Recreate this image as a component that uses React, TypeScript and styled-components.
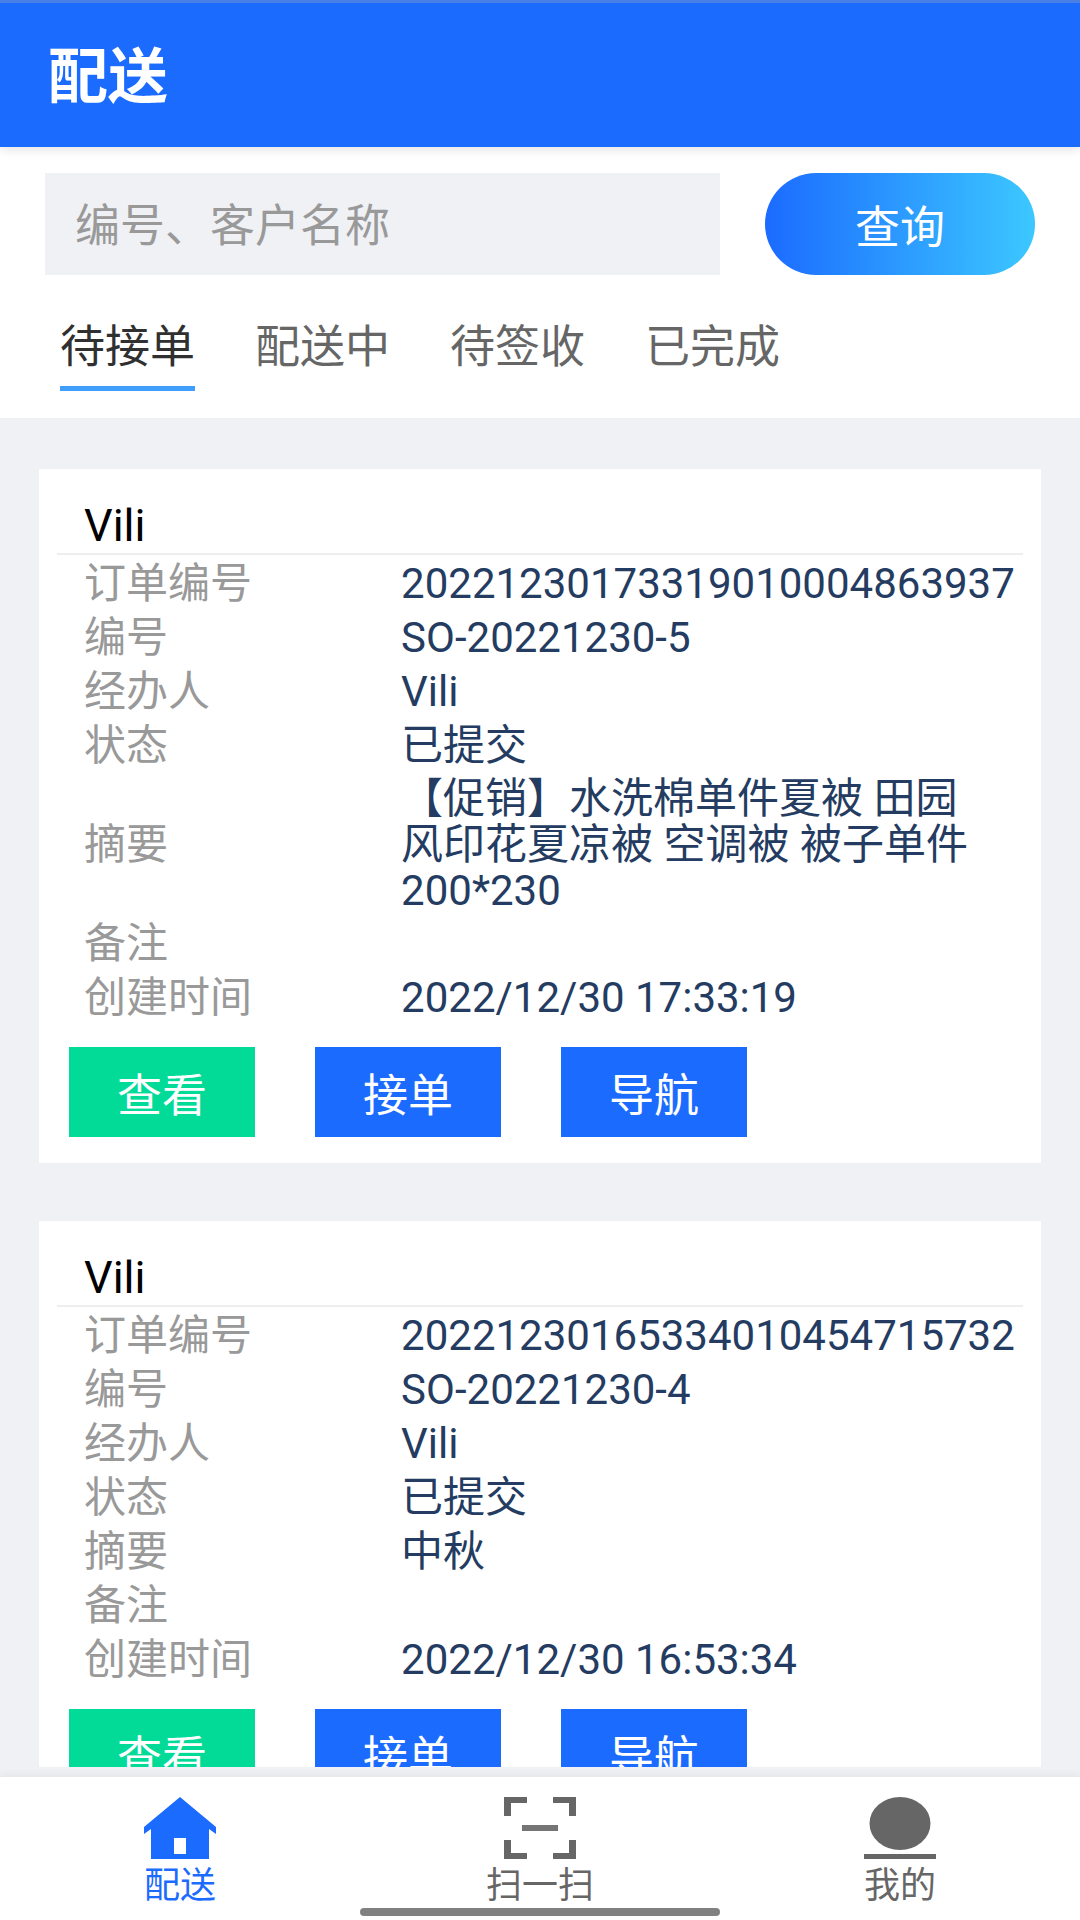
import React, { useState } from "react";
import styled, { createGlobalStyle } from "styled-components";

const BLUE = "#1b6bff";
const GREEN = "#02da98";
const PAGE = "#eff1f5";

const GlobalStyle = createGlobalStyle`
  * { box-sizing: border-box; }
  body {
    margin: 0;
    background: ${PAGE};
    font-family: Roboto, "Noto Sans CJK SC", sans-serif;
  }
  button, input { font-family: inherit; border: 0; border-radius: 0; margin: 0; padding: 0; }
  button { cursor: pointer; }
`;

const Screen = styled.div`
  display: flex;
  flex-direction: column;
  height: 100vh;
`;

const Header = styled.header`
  display: flex;
  align-items: center;
  flex: none;
  height: 147px;
  padding: 6px 48px 0;
  background: ${BLUE};
  border-top: 3px solid #4a80e6;
  box-shadow: 0 2px 10px rgba(0, 0, 0, 0.12);
  z-index: 1;
`;

const Title = styled.h1`
  margin: 0;
  color: #fff;
  font-size: 60px;
  font-weight: 700;
  line-height: 64px;
`;

const Filters = styled.section`
  flex: none;
  padding: 26px 45px 27px;
  background: #fff;
`;

const SearchForm = styled.form`
  display: flex;
  gap: 45px;
`;

const SearchInput = styled.input`
  flex: 1;
  min-width: 0;
  height: 102px;
  padding: 4px 30px 0;
  background: #f0f1f5;
  color: #333;
  font-size: 45px;
  outline: none;
  &::placeholder { color: #999; opacity: 1; }
`;

const SearchButton = styled.button`
  width: 270px;
  height: 102px;
  border-radius: 51px;
  background: linear-gradient(90deg, ${BLUE}, #3cc8ff);
  color: #fff;
  font-size: 45px;
`;

const Tabs = styled.div`
  display: flex;
  gap: 60px;
  margin-top: 43px;
  padding: 0 15px;
`;

const Tab = styled.button<{ $active: boolean }>`
  padding-bottom: 8px;
  background: none;
  border-bottom: 5px solid ${(p) => (p.$active ? "#409eff" : "transparent")};
  color: ${(p) => (p.$active ? "#303030" : "#666")};
  font-size: 45px;
  line-height: 60px;
`;

const OrderList = styled.main`
  display: flex;
  flex-direction: column;
  flex: 1;
  gap: 58px;
  min-height: 0;
  padding: 51px 39px 0;
  overflow-y: auto;
  scrollbar-width: none;
`;

const Card = styled.article`
  flex: none;
  padding: 30px 0 26px;
  background: #fff;
`;

const CardTitle = styled.h2`
  margin: 0 18px;
  padding: 0 27px;
  border-bottom: 2px solid #eee;
  color: #000;
  font-size: 45px;
  font-weight: 400;
  line-height: 54px;
`;

const Fields = styled.dl`
  margin: 0;
  padding: 0 51px 0 45px;
`;

const Field = styled.div`
  display: grid;
  grid-template-columns: 35% 65%;
  align-items: center;
  min-height: 54px;
  padding: 5px 0 1px;
  font-size: 42px;
  line-height: 46px;
`;

const Label = styled.dt`
  color: #999;
`;

const Value = styled.dd`
  margin: 0;
  color: #243c61;
`;

const Actions = styled.div`
  display: flex;
  gap: 60px;
  padding: 24px 30px 0;
`;

const ActionButton = styled.button<{ $color: string }>`
  width: 186px;
  height: 90px;
  background: ${(p) => p.$color};
  color: #fff;
  font-size: 45px;
`;

const BottomBar = styled.footer`
  flex: none;
  margin-top: 10px;
  padding: 20px 0 4px;
  background: #fff;
  box-shadow: 0 -2px 8px rgba(0, 0, 0, 0.06);
`;

const Nav = styled.nav`
  display: flex;
`;

const NavLink = styled.a<{ $active?: boolean }>`
  display: flex;
  flex: 1;
  flex-direction: column;
  align-items: center;
  gap: 5px;
  color: ${(p) => (p.$active ? BLUE : "#666")};
  font-size: 36px;
  line-height: 44px;
  text-decoration: none;
`;

const HomeIndicator = styled.div`
  width: 33.33%;
  height: 8px;
  margin: 0 auto;
  border-radius: 4px;
  background: #808080;
`;

const HouseIcon = () => (
  <svg width="72" height="62" viewBox="0 0 72 62" fill="currentColor" aria-hidden="true">
    <path
      fillRule="evenodd"
      d="M36 0 72 30V37L65 32V62H7V32L0 37V30ZM30 41V57H42V41Z"
    />
  </svg>
);

const ScanIcon = () => (
  <svg width="72" height="62" viewBox="0 0 72 62" fill="currentColor" aria-hidden="true">
    <path d="M0 0H23V6H7V19H0ZM49 0H72V19H65V6H49ZM0 43H7V56H23V62H0ZM65 43H72V62H49V56H65Z" />
    <path d="M18 28H54V34H18Z" opacity="0.9" />
  </svg>
);

const PersonIcon = () => (
  <svg width="72" height="62" viewBox="0 0 72 62" fill="currentColor" aria-hidden="true">
    <ellipse cx="36" cy="26.5" rx="30.5" ry="26.5" />
    <path d="M0 57H72V62H0Z" />
  </svg>
);

const tabs = ["待接单", "配送中", "待签收", "已完成"];

const orders = [
  {
    customer: "Vili",
    fields: [
      ["订单编号", "20221230173319010004863937"],
      ["编号", "SO-20221230-5"],
      ["经办人", "Vili"],
      ["状态", "已提交"],
      ["摘要", "【促销】水洗棉单件夏被 田园风印花夏凉被 空调被 被子单件 200*230"],
      ["备注", ""],
      ["创建时间", "2022/12/30 17:33:19"],
    ],
  },
  {
    customer: "Vili",
    fields: [
      ["订单编号", "20221230165334010454715732"],
      ["编号", "SO-20221230-4"],
      ["经办人", "Vili"],
      ["状态", "已提交"],
      ["摘要", "中秋"],
      ["备注", ""],
      ["创建时间", "2022/12/30 16:53:34"],
    ],
  },
];

export default function App() {
  const [active, setActive] = useState(0);

  return (
    <Screen>
      <GlobalStyle />
      <Header>
        <Title>配送</Title>
      </Header>
      <Filters>
        <SearchForm onSubmit={(e) => e.preventDefault()}>
          <SearchInput type="text" placeholder="编号、客户名称" aria-label="编号、客户名称" />
          <SearchButton type="submit">查询</SearchButton>
        </SearchForm>
        <Tabs role="tablist">
          {tabs.map((name, i) => (
            <Tab
              key={name}
              type="button"
              role="tab"
              aria-selected={i === active}
              $active={i === active}
              onClick={() => setActive(i)}
            >
              {name}
            </Tab>
          ))}
        </Tabs>
      </Filters>
      <OrderList>
        {orders.map((order) => (
          <Card key={order.fields[0][1]}>
            <CardTitle>{order.customer}</CardTitle>
            <Fields>
              {order.fields.map(([label, value]) => (
                <Field key={label}>
                  <Label>{label}</Label>
                  <Value>{value}</Value>
                </Field>
              ))}
            </Fields>
            <Actions>
              <ActionButton type="button" $color={GREEN}>查看</ActionButton>
              <ActionButton type="button" $color={BLUE}>接单</ActionButton>
              <ActionButton type="button" $color={BLUE}>导航</ActionButton>
            </Actions>
          </Card>
        ))}
      </OrderList>
      <BottomBar>
        <Nav>
          <NavLink href="#delivery" $active aria-current="page">
            <HouseIcon />
            配送
          </NavLink>
          <NavLink href="#scan">
            <ScanIcon />
            扫一扫
          </NavLink>
          <NavLink href="#mine">
            <PersonIcon />
            我的
          </NavLink>
        </Nav>
        <HomeIndicator />
      </BottomBar>
    </Screen>
  );
}
